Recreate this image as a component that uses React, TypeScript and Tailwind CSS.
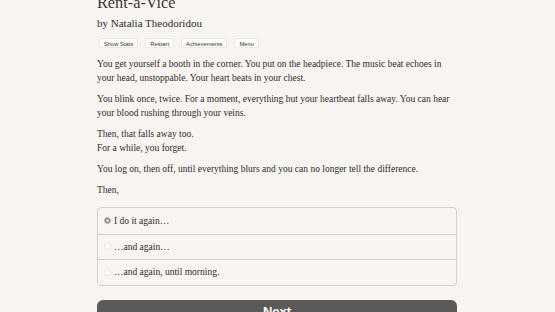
export default function App() {
  return (
    <main
      className="w-[555px] h-[312px] overflow-hidden bg-[#f7f4f1] text-[#2f2c2a]"
      style={{ fontFamily: '"Liberation Serif", serif' }}
    >
      <div className="w-[360px] ml-[97px]">
        <h1 className="text-[16.3px] leading-[20px] -mt-[7px] text-[#3a3735]">Rent-a-Vice</h1>
        <p className="text-[11px] leading-[14px] mt-[3px]">by Natalia Theodoridou</p>

        <div className="flex gap-[7px] mt-[8px] ml-[2px] font-['Liberation_Sans',sans-serif] text-[5.8px] text-[#333]">
          <span className="px-[4px] h-[10px] leading-[8px] pt-[1px] bg-white rounded-[2px] border border-[#ebe7e3]">Show Stats</span>
          <span className="px-[4px] h-[10px] leading-[8px] pt-[1px] bg-white rounded-[2px] border border-[#ebe7e3]">Restart</span>
          <span className="px-[4px] h-[10px] leading-[8px] pt-[1px] bg-white rounded-[2px] border border-[#ebe7e3]">Achievements</span>
          <span className="px-[4px] h-[10px] leading-[8px] pt-[1px] bg-white rounded-[2px] border border-[#ebe7e3]">Menu</span>
        </div>

        <div className="text-[9.5px] leading-[14px] mt-[9px]">
          <p>You get yourself a booth in the corner. You put on the headpiece. The music beat echoes in your head, unstoppable. Your heart beats in your chest.</p>
          <p className="mt-[7px]">You blink once, twice. For a moment, everything but your heartbeat falls away. You can hear your blood rushing through your veins.</p>
          <p className="mt-[7px]">Then, that falls away too.<br />For a while, you forget.</p>
          <p className="mt-[7px]">You log on, then off, until everything blurs and you can no longer tell the difference.</p>
          <p className="mt-[7px]">Then,</p>
        </div>

        <div className="mt-[10px] border border-[#d6d1cc] rounded-[4px] text-[9.5px]">
          {[
            { t: 'I do it again…', on: true },
            { t: '…and again…', on: false },
            { t: '…and again, until morning.', on: false },
          ].map((c, i) => (
            <div
              key={i}
              className={`flex items-center h-[25.5px] pl-[6px] gap-[3px] ${i > 0 ? 'border-t border-[#d6d1cc]' : ''}`}
            >
              {c.on ? (
                <span className="w-[7px] h-[7px] rounded-full bg-[#8f8b88] border border-[#bcb8b4] flex items-center justify-center">
                  <span className="w-[3px] h-[3px] rounded-full bg-[#d8d5d2]" />
                </span>
              ) : (
                <span className="w-[7px] h-[7px] rounded-full bg-white border border-[#e6e2de]" />
              )}
              <span>{c.t}</span>
            </div>
          ))}
        </div>

        <div className="mt-[14px] h-[28px] rounded-[6px] bg-[#5c5a58] text-white text-center font-['Liberation_Sans',sans-serif] font-bold text-[13px] leading-[24px]">
          Next
        </div>
      </div>
    </main>
  )
}
